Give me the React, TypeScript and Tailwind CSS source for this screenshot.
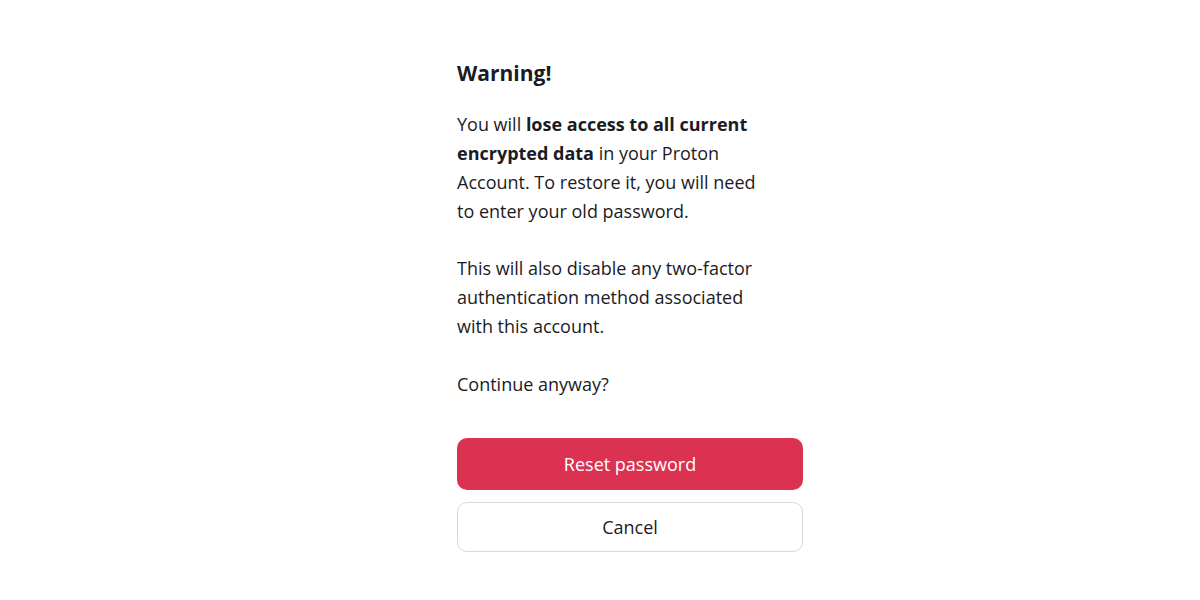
import React from 'react';

export default function App() {
  return (
    <div className="min-h-[600px] w-full bg-white flex justify-center pl-[60px]" style={{ fontFamily: '"Open Sans", "Noto Sans", sans-serif' }}>
      <div className="w-[346px] pt-[58px] text-[#1b1b24]">
        <h1 className="text-[21px] font-bold leading-[30px]">Warning!</h1>
        <div className="mt-[22px] text-[18px] leading-[29px]">
          <p>
            You will <strong className="font-bold">lose access to all current<br />encrypted data</strong> in your Proton
            <br />
            Account. To restore it, you will need
            <br />
            to enter your old password.
          </p>
          <p className="mt-[28px]">
            This will also disable any two-factor
            <br />
            authentication method associated
            <br />
            with this account.
          </p>
          <p className="mt-[29px]">Continue anyway?</p>
        </div>
        <div className="mt-[39px] flex flex-col gap-[12px]">
          <button className="h-[52px] w-full rounded-[10px] bg-[#dc3251] text-white text-[18px]">Reset password</button>
          <button className="h-[50px] w-full rounded-[10px] border border-[#d8d8dc] bg-white text-[18px] text-[#1b1b24]">Cancel</button>
        </div>
      </div>
    </div>
  );
}
